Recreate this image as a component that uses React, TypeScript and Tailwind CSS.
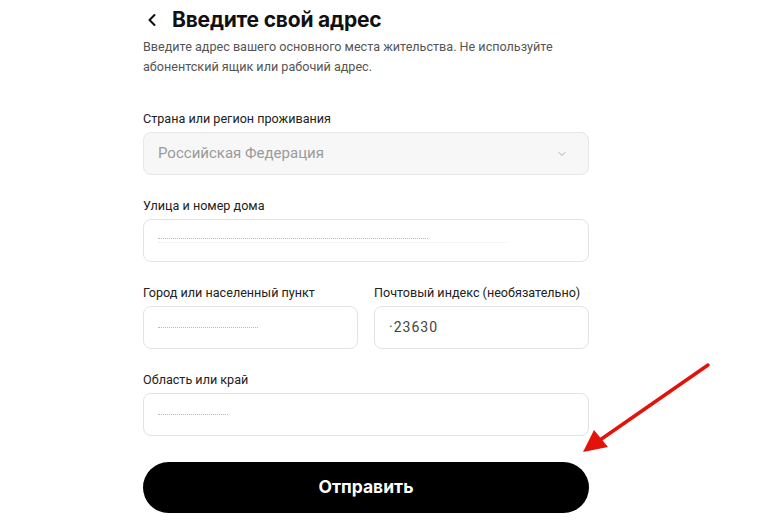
import { ChevronLeft, ChevronDown } from 'lucide-react'

function Field({ label, children }: { label: string; children: React.ReactNode }) {
  return (
    <div className="flex flex-col">
      <label className="text-[12.6px] leading-[18px] text-[#222] whitespace-nowrap">{label}</label>
      <div className="mt-[4px]">{children}</div>
    </div>
  )
}

function Redacted({ w1, w2 }: { w1: number; w2?: number }) {
  return (
    <div className="flex flex-col gap-[3px] px-[14px]">
      <div className="h-[1px] border-t border-dotted border-[#bbb]" style={{ width: w1 }} />
      {w2 && <div className="h-[1px] border-t border-dotted border-[#eee]" style={{ width: w2 }} />}
    </div>
  )
}

export default function App() {
  return (
    <div className="relative w-[764px] h-[520px] bg-white overflow-hidden font-['Roboto',sans-serif] text-[#111]">
      <div className="w-[446px] ml-[143px] pt-[7px]">
        {/* Header */}
        <div className="flex items-center gap-[10px] h-[26px]">
          <ChevronLeft className="w-[20px] h-[20px] -ml-[1px]" strokeWidth={2.5} />
          <h1 className="font-['Inter',sans-serif] text-[21px] font-bold leading-[26px] tracking-[-0.2px]">Введите свой адрес</h1>
        </div>
        <p className="mt-[4px] text-[12.6px] leading-[20px] text-[#555]">
          Введите адрес вашего основного места жительства. Не используйте абонентский ящик или рабочий адрес.
        </p>

        <div className="mt-[33px] flex flex-col gap-[22px]">
          <Field label="Страна или регион проживания">
            <div className="h-[43px] rounded-[8px] border border-[#e6e6e6] bg-[#f7f7f7] flex items-center justify-between pl-[14px] pr-[20px]">
              <span className="text-[15px] text-[#9a9a9a]">Российская Федерация</span>
              <ChevronDown className="w-[12px] h-[12px] text-[#aaa]" strokeWidth={2} />
            </div>
          </Field>

          <Field label="Улица и номер дома">
            <div className="h-[43px] rounded-[8px] border border-[#e3e3e3] bg-white flex items-center">
              <Redacted w1={270} w2={350} />
            </div>
          </Field>

          <div className="grid grid-cols-2 gap-[16px]">
            <Field label="Город или населенный пункт">
              <div className="h-[43px] rounded-[8px] border border-[#e3e3e3] bg-white flex items-center">
                <Redacted w1={100} />
              </div>
            </Field>
            <Field label="Почтовый индекс (необязательно)">
              <div className="h-[43px] rounded-[8px] border border-[#e3e3e3] bg-white flex items-center px-[14px]">
                <span className="text-[14px] text-[#444] tracking-[1px]">·23630</span>
              </div>
            </Field>
          </div>

          <Field label="Область или край">
            <div className="h-[43px] rounded-[8px] border border-[#e3e3e3] bg-white flex items-center">
              <Redacted w1={70} />
            </div>
          </Field>
        </div>

        <button className="mt-[26px] w-full h-[51px] rounded-full bg-black text-white font-['Inter',sans-serif] text-[17.5px] font-bold">
          Отправить
        </button>
      </div>

      {/* Red annotation arrow */}
      <svg className="absolute left-0 top-0 pointer-events-none" width="764" height="520" viewBox="0 0 764 520">
        <line x1="708" y1="365" x2="600" y2="440" stroke="#e3120b" strokeWidth="3.5" strokeLinecap="round" />
        <polygon points="583,452 594,430 608,447" fill="#e3120b" />
      </svg>
    </div>
  )
}
